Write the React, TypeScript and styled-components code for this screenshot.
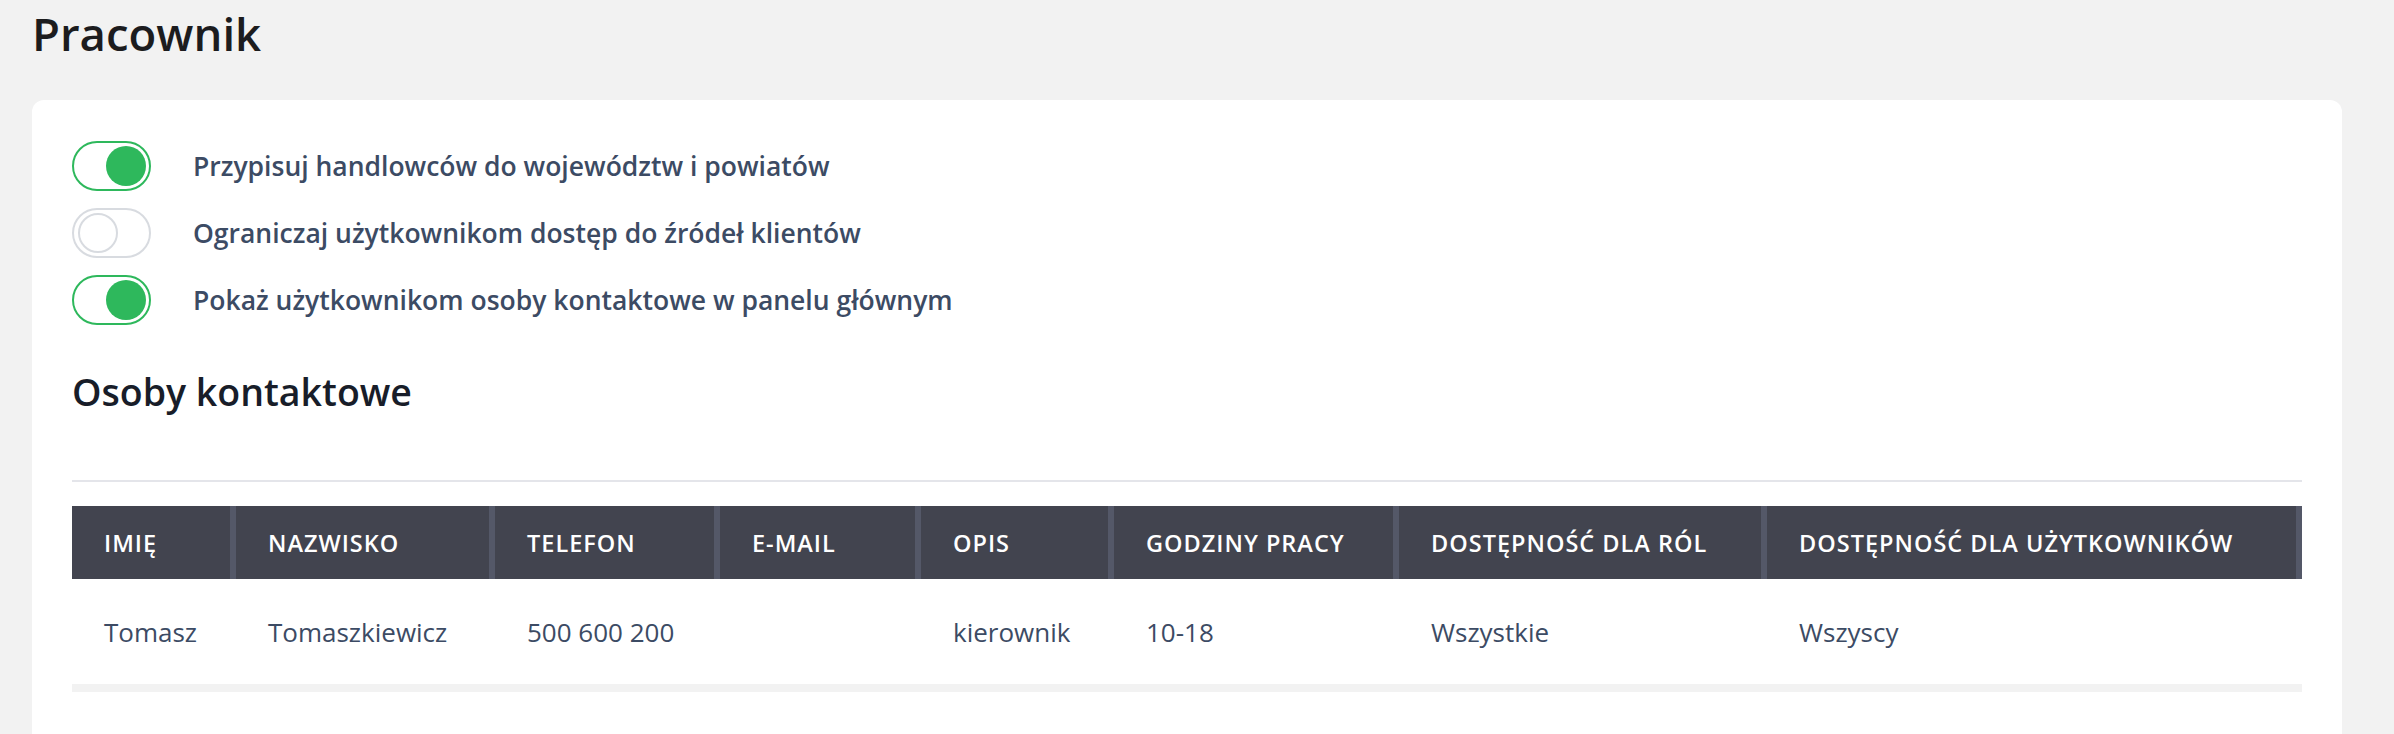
import React from "react";
import styled, { createGlobalStyle } from "styled-components";

const GlobalStyle = createGlobalStyle`
  html, body {
    margin: 0;
    padding: 0;
    background: #f2f2f2;
    font-family: "Open Sans", "Noto Sans", sans-serif;
  }
  * { box-sizing: border-box; }
`;

const Page = styled.div`
  padding: 0 52px 0 32px;
`;

const Title = styled.h1`
  margin: 0;
  height: 100px;
  padding-top: 2px;
  font-size: 45.5px;
  line-height: 62px;
  font-weight: 600;
  color: #1c1c1e;
`;

const Card = styled.section`
  background: #ffffff;
  border-radius: 12px;
  padding: 41px 40px 60px;
`;

const ToggleList = styled.div`
  display: flex;
  flex-direction: column;
  gap: 17px;
`;

const ToggleRow = styled.label`
  display: flex;
  align-items: center;
  gap: 42px;
  height: 50px;
`;

const Switch = styled.span<{ $on: boolean }>`
  position: relative;
  flex: none;
  width: 79px;
  height: 50px;
  border-radius: 25px;
  background: #fff;
  border: 2px solid ${(p) => (p.$on ? "#2eb85c" : "#d8dbe0")};
`;

const Knob = styled.span<{ $on: boolean }>`
  position: absolute;
  top: 3px;
  left: ${(p) => (p.$on ? "32px" : "4px")};
  width: 40px;
  height: 40px;
  border-radius: 50%;
  background: ${(p) => (p.$on ? "#2eb85c" : "#ffffff")};
  border: ${(p) => (p.$on ? "none" : "2px solid #d8dbe0")};
`;

const ToggleLabel = styled.span`
  font-size: 26.5px;
  font-weight: 600;
  color: #3c4b64;
  margin-top: -1px;
`;

const SectionTitle = styled.h2`
  margin: 0;
  padding-top: 43px;
  height: 155px;
  font-size: 37.5px;
  line-height: 48px;
  font-weight: 600;
  color: #181d29;
`;

const Divider = styled.hr`
  margin: 0 0 24px;
  border: none;
  height: 2px;
  background: #e4e5ea;
`;

const Table = styled.table`
  width: 100%;
  border-collapse: separate;
  border-spacing: 0;
  table-layout: fixed;
`;

const Th = styled.th<{ $w: number }>`
  width: ${(p) => p.$w}px;
  height: 73px;
  padding: 0 0 0 32px;
  text-align: left;
  background: #42444f;
  border-right: 6px solid #545868;
  color: #ffffff;
  font-size: 23.5px;
  font-weight: 600;
  letter-spacing: 1px;
  white-space: nowrap;
`;

const Td = styled.td`
  height: 105px;
  padding: 0 0 0 32px;
  text-align: left;
  font-size: 26px;
  color: #3c4b64;
  white-space: nowrap;
`;

const ScrollTrack = styled.div`
  height: 8px;
  background: #f2f2f2;
`;

const toggles = [
  { on: true, label: "Przypisuj handlowców do województw i powiatów" },
  { on: false, label: "Ograniczaj użytkownikom dostęp do źródeł klientów" },
  { on: true, label: "Pokaż użytkownikom osoby kontaktowe w panelu głównym" },
];

const columns: [string, number][] = [
  ["IMIĘ", 164],
  ["NAZWISKO", 259],
  ["TELEFON", 225],
  ["E-MAIL", 201],
  ["OPIS", 193],
  ["GODZINY PRACY", 285],
  ["DOSTĘPNOŚĆ DLA RÓL", 368],
  ["DOSTĘPNOŚĆ DLA UŻYTKOWNIKÓW", 535],
];

const row = ["Tomasz", "Tomaszkiewicz", "500 600 200", "", "kierownik", "10-18", "Wszystkie", "Wszyscy"];

export default function App() {
  return (
    <>
      <GlobalStyle />
      <Page>
        <Title>Pracownik</Title>
        <Card>
          <ToggleList>
            {toggles.map((t) => (
              <ToggleRow key={t.label}>
                <Switch $on={t.on}>
                  <Knob $on={t.on} />
                </Switch>
                <ToggleLabel>{t.label}</ToggleLabel>
              </ToggleRow>
            ))}
          </ToggleList>
          <SectionTitle>Osoby kontaktowe</SectionTitle>
          <Divider />
          <Table>
            <thead>
              <tr>
                {columns.map(([name, w]) => (
                  <Th key={name} $w={w}>
                    {name}
                  </Th>
                ))}
              </tr>
            </thead>
            <tbody>
              <tr>
                {row.map((v, i) => (
                  <Td key={i}>{v}</Td>
                ))}
              </tr>
            </tbody>
          </Table>
          <ScrollTrack />
        </Card>
      </Page>
    </>
  );
}
